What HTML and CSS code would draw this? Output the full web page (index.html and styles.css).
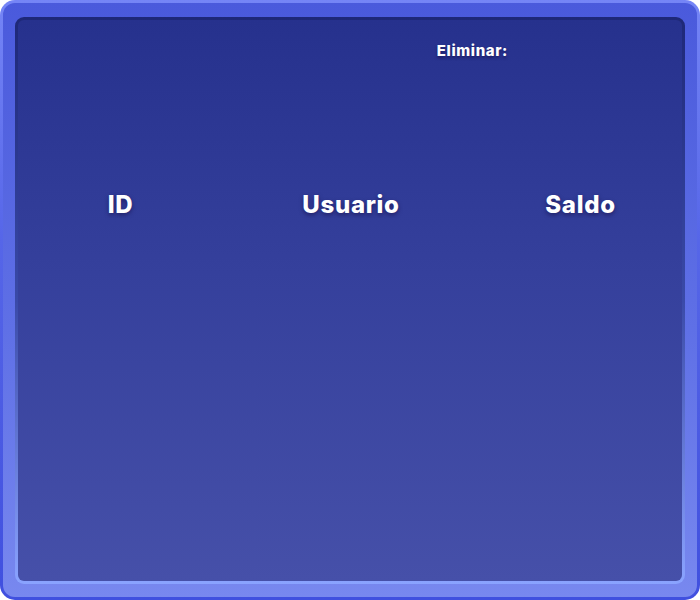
FILE: index.html
```html
<!DOCTYPE html>
<html lang="es">
<head>
<meta charset="utf-8">
<title>Usuarios</title>
<link rel="stylesheet" href="styles.css">
</head>
<body>
<div class="frame">
  <div class="panel">
    <div class="toolbar">
      <span class="label">Eliminar:</span>
    </div>
    <div class="table-head">
      <div class="th">ID</div>
      <div class="th">Usuario</div>
      <div class="th">Saldo</div>
    </div>
  </div>
</div>
</body>
</html>
```
FILE: styles.css
```css
* { box-sizing: border-box; }
html, body { margin: 0; padding: 0; background: #ffffff; }
body { font-family: Inter, "Open Sans", "DejaVu Sans", sans-serif; }

.frame {
  width: 700px;
  height: 600px;
  border-radius: 15px;
  border: 3px solid transparent;
  background:
    linear-gradient(180deg, #4a5adc 0%, #5f70e6 55%, #7888ef 100%) padding-box,
    linear-gradient(180deg, #7585f6 0%, #5666e8 40%, #4050df 100%) border-box;
  padding: 14px 12px 13px 12px;
  display: flex;
}

.panel {
  flex: 1;
  border-radius: 9px;
  border: 3px solid transparent;
  background:
    linear-gradient(180deg, #26318d 0%, #35409c 45%, #4650a9 100%) padding-box,
    linear-gradient(180deg, #1e2878 0%, #3a4aa8 50%, #8aa3ff 100%) border-box;
  display: flex;
  flex-direction: column;
}

.toolbar {
  display: flex;
  justify-content: flex-end;
  padding: 21px 174px 0 0;
}

.label {
  color: #ffffff;
  font-weight: 800;
  font-size: 15px;
  line-height: 20px;
  letter-spacing: 0.6px;
  text-shadow: 0 2px 3px rgba(20, 10, 60, 0.55);
}

.table-head {
  display: grid;
  grid-template-columns: 205px 256px 1fr;
  margin-top: 129px;
}

.th {
  text-align: center;
  color: #ffffff;
  font-weight: 800;
  font-size: 24px;
  line-height: 30px;
  letter-spacing: 0.7px;
  text-shadow: 0 2px 4px rgba(20, 10, 60, 0.55);
}
```
